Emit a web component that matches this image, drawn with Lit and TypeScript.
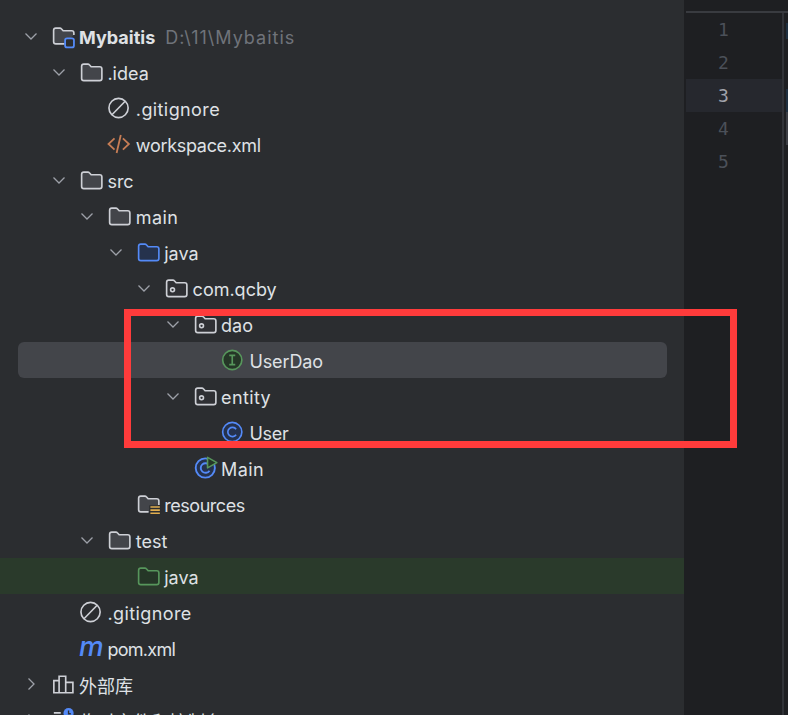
import { LitElement, html, css, svg } from "lit";
import { customElement } from "lit/decorators.js";

const L = "#ced0d6";
const F = "#43454a";
const folderPath = "M1.75 4.2c0-.8.65-1.45 1.45-1.45h2.7c.4 0 .75.15 1 .45l1.2 1.3h5.7c.8 0 1.45.65 1.45 1.45v6.3c0 .8-.65 1.45-1.45 1.45H3.2c-.8 0-1.45-.65-1.45-1.45z";

const folder = (stroke = L, fill = F) => svg`<path d=${folderPath} fill=${fill} stroke=${stroke} stroke-width="1.1"/>`;

const icons: Record<string, unknown> = {
  module: svg`<path d="M9 13.25H3.2c-.8 0-1.45-.65-1.45-1.45V4.2c0-.8.65-1.45 1.45-1.45h2.7c.4 0 .75.15 1 .45l1.2 1.3h5.7c.8 0 1.45.65 1.45 1.45v1.3" fill=${F} stroke=${L} stroke-width="1.1"/>
    <rect x="9.4" y="9.6" width="5.9" height="6" rx="1.3" fill="#2b2d30" stroke="#548af7" stroke-width="1.2"/>`,
  folder: folder(),
  source: folder("#548af7", "#25324d"),
  test: folder("#57965c", "#253627"),
  pkg: svg`${folder(L, "#2f3034")}<circle cx="5.7" cy="9.2" r="1.3" fill="none" stroke=${L} stroke-width="1.05"/>`,
  resources: svg`<path d="M8.4 13.25H3.2c-.8 0-1.45-.65-1.45-1.45V4.2c0-.8.65-1.45 1.45-1.45h2.7c.4 0 .75.15 1 .45l1.2 1.3h5.7c.8 0 1.45.65 1.45 1.45V8.6" fill=${F} stroke=${L} stroke-width="1.1"/>
    <rect x="8.8" y="8.9" width="7.4" height="6.4" fill="#2b2d30"/>
    <path d="M9.6 10h6.3M9.6 12.1h6.3M9.6 14.2h6.3" stroke="#e0ad4f" stroke-width="1.05" fill="none"/>`,
  ignore: svg`<circle cx="7.7" cy="8" r="6.4" fill="none" stroke=${L} stroke-width="1.1"/><path d="M3.3 12.5 12.1 3.5" stroke=${L} stroke-width="1.1"/>`,
  xml: svg`<path d="M5 4.2 1 8l4 3.8M10.6 4.2l4 3.8-4 3.8M9.2 2 6.4 14" fill="none" stroke="#c77d55" stroke-width="1.2"/>`,
  iface: svg`<circle cx="7.5" cy="8" r="6.4" fill="#253627" stroke="#57965c" stroke-width="1.1"/><path d="M5.5 4.9h4M5.5 11.1h4M7.5 4.9v6.2" fill="none" stroke="#57965c" stroke-width="1.1"/>`,
  cls: svg`<circle cx="7.5" cy="8" r="6.4" fill="#25324d" stroke="#548af7" stroke-width="1.1"/><path d="M10.1 6.1A3.1 3.1 0 1 0 10.1 9.9" fill="none" stroke="#548af7" stroke-width="1.1"/>`,
  main: svg`<circle cx="8.2" cy="8" r="6.4" fill="#25324d" stroke="#548af7" stroke-width="1.25"/><path d="M11 6.2A3.2 3.2 0 1 0 11 9.8" fill="none" stroke="#548af7" stroke-width="1.25"/>
    <path d="M9.7 .9 15.9 4.4 9.7 7.9z" fill="#253627" stroke="#57965c" stroke-width="1.05" stroke-linejoin="round"/>`,
  maven: svg`<text x="0" y="13.2" class="mvn">m</text>`,
  lib: svg`<path d="M1.9 13.8V5.7h3.5v8.1zM5.4 13.8V2.8h4.4v11zM9.8 13.8V6.9h4.8v6.9z" fill="none" stroke=${L} stroke-width="1.1"/>`,
  scratch: svg`<path d="M1.9 3.2h4.6M1.9 6.2h6.5M1.9 9.2h6.5" fill="none" stroke=${L} stroke-width="1.1"/><circle cx="11.7" cy="3.4" r="3.4" fill="#548af7"/><path d="M11.7 1.6v2.2h1.5" fill="none" stroke="#2b2d30" stroke-width=".9"/>`,
};

interface Row {
  level: number;
  icon: string;
  name: string;
  hint?: string;
  arrow?: "down" | "right";
  bold?: boolean;
  kind?: string;
  ls?: number;
}

const ROWS: Row[] = [
  { level: 0, icon: "module", name: "Mybaitis", hint: "D:\\11\\Mybaitis", arrow: "down", bold: true },
  { level: 1, icon: "folder", name: ".idea", arrow: "down" },
  { level: 2, icon: "ignore", name: ".gitignore", ls: 0.4 },
  { level: 2, icon: "xml", name: "workspace.xml", ls: -0.3 },
  { level: 1, icon: "folder", name: "src", arrow: "down" },
  { level: 2, icon: "folder", name: "main", arrow: "down", ls: 0.4 },
  { level: 3, icon: "source", name: "java", arrow: "down" },
  { level: 4, icon: "pkg", name: "com.qcby", arrow: "down" },
  { level: 5, icon: "pkg", name: "dao", arrow: "down" },
  { level: 6, icon: "iface", name: "UserDao", kind: "selected", ls: -0.1 },
  { level: 5, icon: "pkg", name: "entity", arrow: "down", ls: 0.4 },
  { level: 6, icon: "cls", name: "User", ls: -0.25 },
  { level: 5, icon: "main", name: "Main", ls: 0.4 },
  { level: 3, icon: "resources", name: "resources", ls: -0.45 },
  { level: 2, icon: "folder", name: "test", arrow: "down" },
  { level: 3, icon: "test", name: "java", kind: "tested" },
  { level: 1, icon: "ignore", name: ".gitignore", ls: 0.4 },
  { level: 1, icon: "maven", name: "pom.xml", ls: -0.7 },
  { level: 0, icon: "lib", name: "外部库", arrow: "right" },
  { level: 0, icon: "scratch", name: "临时文件和控制台", arrow: "right" },
];

const INDENT = 28.4;

@customElement("app-root")
export class AppRoot extends LitElement {
  static styles = css`
    :host {
      display: flex;
      position: relative;
      width: 788px;
      height: 715px;
      overflow: hidden;
      background: #1e1f22;
      font-family: Inter, "Noto Sans CJK SC", sans-serif;
    }
    .tree {
      width: 684px;
      flex: none;
      box-sizing: border-box;
      padding-top: 18px;
      background: #2b2d30;
    }
    .row {
      position: relative;
      display: flex;
      align-items: center;
      height: 36px;
      font-size: 18px;
      color: #dfe1e5;
      white-space: nowrap;
    }
    .row.tested {
      background: #2a3a2b;
    }
    .row.selected::before {
      content: "";
      position: absolute;
      left: 18px;
      right: 17px;
      top: 0;
      bottom: 0;
      border-radius: 6px;
      background: #43454a;
    }
    .row > * {
      position: relative;
    }
    .arrow {
      width: 20px;
      height: 20px;
      flex: none;
      margin-right: 10px;
    }
    .arrow.none {
      visibility: hidden;
    }
    .icon {
      width: 24px;
      height: 24px;
      flex: none;
      margin-right: 4.5px;
      overflow: visible;
    }
    .label {
      padding-top: 2px;
    }
    .mvn {
      font: italic 500 18.5px Inter, sans-serif;
      fill: #548af7;
    }
    .bold {
      font-weight: 700;
    }
    .hint {
      padding-top: 2px;
      margin-left: 10px;
      color: #6f737a;
      letter-spacing: 1px;
    }
    .editor {
      flex: 1;
      min-width: 0;
      display: flex;
      flex-direction: column;
      padding-left: 2px;
    }
    .tabs {
      height: 11px;
      flex: none;
      border-bottom: 2px solid #393b40;
    }
    .body {
      flex: 1;
      display: flex;
    }
    .gutter {
      width: 98px;
      flex: none;
      border-right: 2px solid #313338;
      box-sizing: border-box;
      font: 18px "DejaVu Sans Mono", monospace;
      color: #4b5059;
    }
    .num {
      height: 32.9px;
      line-height: 34.9px;
      padding-left: 32px;
    }
    .num.current {
      background: #26282e;
      color: #a1a3ab;
    }
    .code {
      flex: 1;
      padding-left: 2px;
    }
    .stripe {
      height: 32.9px;
    }
    .stripe.a {
      background: linear-gradient(#1e1f22 30%, #1f3040 30%, #1f3040 80%, #1e1f22 80%);
    }
    .stripe.b {
      background: linear-gradient(#1e1f22 30%, #1f3040 30%);
    }
    .stripe.c {
      background: #3c3e44;
    }
    .mark {
      position: absolute;
      box-sizing: border-box;
      left: 124px;
      top: 309px;
      width: 613px;
      height: 139px;
      border: 7px solid #ff3b3b;
    }
  `;

  private renderRow(r: Row) {
    return html`<div class="row ${r.kind ?? ""}" style="padding-left:${20.5 + r.level * INDENT}px">
      <svg class="arrow ${r.arrow ? "" : "none"}" viewBox="0 0 20 20">
        ${r.arrow === "right"
          ? svg`<path d="M7.5 4.5 13 10l-5.5 5.5" fill="none" stroke="#9da0a8" stroke-width="1.3"/>`
          : svg`<path d="M4.5 7.5 10 13l5.5-5.5" fill="none" stroke="#9da0a8" stroke-width="1.3"/>`}
      </svg>
      <svg class="icon" viewBox="0 0 16 16">${icons[r.icon]}</svg>
      <span class="label ${r.bold ? "bold" : ""}" style="letter-spacing:${r.ls ?? 0}px">${r.name}</span>
      ${r.hint ? html`<span class="hint">${r.hint}</span>` : null}
    </div>`;
  }

  render() {
    return html`
      <div class="tree">${ROWS.map((r) => this.renderRow(r))}</div>
      <div class="editor">
        <div class="tabs"></div>
        <div class="body">
          <div class="gutter">
            ${[1, 2, 3, 4, 5].map(
              (n) => html`<div class="num ${n === 3 ? "current" : ""}">${n}</div>`
            )}
          </div>
          <div class="code">
            <div class="stripe a"></div>
            <div class="stripe"></div>
            <div class="stripe b"></div>
            <div class="stripe c"></div>
          </div>
        </div>
      </div>
      <div class="mark"></div>
    `;
  }
}
